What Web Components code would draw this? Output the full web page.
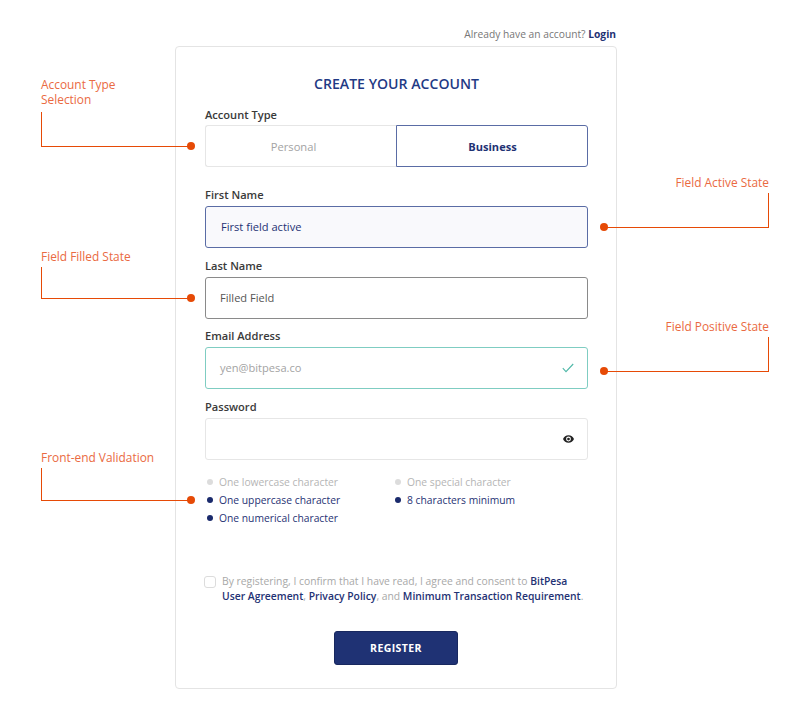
<!DOCTYPE html>
<html lang="en">
<head>
<meta charset="utf-8">
<title>Create your account</title>
<style>
  html, body { margin: 0; background: #fff; }
  body { font-family: "Open Sans", sans-serif; width: 800px; height: 722px; position: relative; overflow: hidden; }
</style>
</head>
<body>
<signup-page>
  <call-out style="left:41px;top:77px;width:150px;--gap:5px;--stem:34px" label="Account Type&#10;Selection"></call-out>
  <call-out style="left:41px;top:249px;width:150px;--stem:31px" label="Field Filled State"></call-out>
  <call-out style="left:41px;top:450px;width:150px;--stem:32px" label="Front-end Validation"></call-out>
  <call-out side="right" style="left:604px;top:175px;width:165px;--stem:34px" label="Field Active State"></call-out>
  <call-out side="right" style="left:604px;top:319px;width:165px;--stem:34px" label="Field Positive State"></call-out>
</signup-page>

<script>
const calloutTemplate = document.createElement('template');
calloutTemplate.innerHTML = `
  <style>
    :host {
      position: absolute;
      display: block;
      font-size: 11.9px;
      line-height: 15px;
      color: #ea6a42;
    }
    :host([side="right"]) { text-align: right; }
    .label { white-space: pre-line; margin-bottom: var(--gap, 3px); }
    .line {
      height: var(--stem);
      border-left: 1px solid #e64a06;
      border-bottom: 1px solid #e64a06;
      position: relative;
    }
    :host([side="right"]) .line {
      border-left: 0;
      border-right: 1px solid #e64a06;
    }
    .dot {
      position: absolute;
      right: -4px;
      bottom: -4px;
      width: 8px;
      height: 8px;
      border-radius: 50%;
      background: #e64a06;
    }
    :host([side="right"]) .dot { right: auto; left: -4px; }
  </style>
  <div class="label"></div>
  <div class="line"><span class="dot"></span></div>
`;

class CallOut extends HTMLElement {
  constructor() {
    super();
    this.attachShadow({ mode: 'open' });
    this.shadowRoot.appendChild(calloutTemplate.content.cloneNode(true));
  }

  connectedCallback() {
    this.shadowRoot.querySelector('.label').textContent = this.getAttribute('label');
  }
}

const fieldTemplate = document.createElement('template');
fieldTemplate.innerHTML = `
  <style>
    :host { display: block; }
    .label {
      font-size: 11.1px;
      font-weight: 600;
      line-height: 16px;
      color: #3a3a3a;
      margin-bottom: 3px;
    }
    .box {
      box-sizing: border-box;
      height: 42px;
      display: flex;
      align-items: center;
      justify-content: space-between;
      padding: 0 13px 0 15px;
      border: 1px solid #e6e6e6;
      border-radius: 3px;
      background: #fff;
      font-size: 11.1px;
      color: #555;
    }
    .box span { padding-bottom: 2px; }
    :host([state="active"]) .box {
      border-color: #5a6ca5;
      background: #f9f9fc;
      color: #1f3274;
    }
    :host([state="filled"]) .box { border-color: #8a8a8a; padding-left: 14px; }
    :host([state="positive"]) .box { border-color: #7fcdc2; color: #a3a3a3; padding-left: 14px; }
    ::slotted(svg) { display: block; }
  </style>
  <div class="label"></div>
  <div class="box"><span></span><slot></slot></div>
`;

class FormField extends HTMLElement {
  constructor() {
    super();
    this.attachShadow({ mode: 'open' });
    this.shadowRoot.appendChild(fieldTemplate.content.cloneNode(true));
  }

  connectedCallback() {
    this.shadowRoot.querySelector('.label').textContent = this.getAttribute('label');
    this.shadowRoot.querySelector('.box span').textContent = this.getAttribute('value') || '';
  }
}

const toggleTemplate = document.createElement('template');
toggleTemplate.innerHTML = `
  <style>
    :host { display: block; }
    .label {
      font-size: 11.1px;
      font-weight: 600;
      line-height: 16px;
      color: #3a3a3a;
      margin-bottom: 2px;
    }
    .options { display: grid; grid-template-columns: 191px 192px; height: 42px; }
    .option {
      display: flex;
      align-items: center;
      justify-content: center;
      box-sizing: border-box;
      font-size: 11.2px;
    }
    .off {
      border: 1px solid #e6e6e6;
      border-right: 0;
      border-radius: 3px 0 0 3px;
      color: #a3a3a3;
      padding-right: 15px;
    }
    .on {
      border: 1px solid #5a6ca5;
      border-radius: 0 3px 3px 0;
      color: #1f3274;
      font-weight: 700;
      font-size: 11.05px;
      padding-left: 1px;
    }
  </style>
  <div class="label">Account Type</div>
  <div class="options">
    <div class="option off">Personal</div>
    <div class="option on">Business</div>
  </div>
`;

class AccountToggle extends HTMLElement {
  constructor() {
    super();
    this.attachShadow({ mode: 'open' });
    this.shadowRoot.appendChild(toggleTemplate.content.cloneNode(true));
  }
}

const ruleTemplate = document.createElement('template');
ruleTemplate.innerHTML = `
  <style>
    :host {
      display: flex;
      align-items: center;
      gap: 6px;
      height: 18px;
      font-size: 10.3px;
      color: #b5b5b5;
    }
    .bullet { width: 6px; height: 6px; border-radius: 50%; background: #dcdcdc; flex: none; }
    :host([met]) { color: #1f3274; }
    :host([met]) .bullet { background: #1a2a6c; }
  </style>
  <span class="bullet"></span><slot></slot>
`;

class PasswordRule extends HTMLElement {
  constructor() {
    super();
    this.attachShadow({ mode: 'open' });
    this.shadowRoot.appendChild(ruleTemplate.content.cloneNode(true));
  }
}

const pageTemplate = document.createElement('template');
pageTemplate.innerHTML = `
  <style>
    :host { display: block; padding: 26px 0 0 175px; }
    .top {
      box-sizing: border-box;
      width: 442px;
      height: 20px;
      padding-right: 1px;
      text-align: right;
      font-size: 10.25px;
      line-height: 16px;
      color: #777;
    }
    a { color: #1f3274; font-weight: 700; text-decoration: none; }
    .card {
      box-sizing: border-box;
      width: 442px;
      height: 643px;
      padding: 26px 28px 0 29px;
      border: 1px solid #e4e4e4;
      border-radius: 4px;
      background: #fff;
    }
    h1 {
      margin: 0 0 12px;
      text-align: center;
      font-size: 14.1px;
      line-height: 22px;
      font-weight: 600;
      color: #1f3a85;
    }
    .fields { display: flex; flex-direction: column; }
    .first { margin-top: 20px; }
    .last { margin-top: 10px; }
    .email { margin-top: 9px; }
    .password { margin-top: 10px; }
    .rules {
      display: grid;
      grid-template-columns: 188px 1fr;
      padding: 13px 0 0 2px;
    }
    .consent {
      display: flex;
      gap: 6px;
      margin: 47px 0 0 -1px;
      font-size: 10.35px;
      line-height: 14.5px;
      color: #a8a8a8;
    }
    .box {
      box-sizing: border-box;
      flex: none;
      width: 12px;
      height: 12px;
      margin-top: 2px;
      border: 1px solid #dcdcdc;
      border-radius: 3px;
    }
    .consent a { font-weight: 600; }
    button {
      display: block;
      width: 124px;
      height: 34px;
      margin: 28px 0 0 129px;
      padding: 0;
      border: 1px solid #18285f;
      border-radius: 3px;
      background: #1f3274;
      color: #fff;
      font: 700 10.5px "Open Sans", sans-serif;
      letter-spacing: .4px;
    }
  </style>
  <div class="top">Already have an account? <a href="#login">Login</a></div>
  <section class="card">
    <h1>CREATE YOUR ACCOUNT</h1>
    <div class="fields">
      <account-toggle></account-toggle>
      <form-field class="first" state="active" label="First Name" value="First field active"></form-field>
      <form-field class="last" state="filled" label="Last Name" value="Filled Field"></form-field>
      <form-field class="email" state="positive" label="Email Address" value="yen@bitpesa.co">
        <svg width="12" height="10" viewBox="0 0 12 10" fill="none" stroke="#4fb8a8" stroke-width="1.1"><path d="M.8 5.2 4 8.6 11.2 1"/></svg>
      </form-field>
      <form-field class="password" label="Password">
        <svg width="11" height="8" viewBox="0 0 24 16"><path fill="#222" fill-rule="evenodd" d="M12 0C6.5 0 2 3.3 0 8c2 4.700 6.500 8 12 8s10-3.300 12-8c-2-4.700-6.500-8-12-8Zm0 13.300A5.300 5.300 0 1 1 12 2.700a5.300 5.300 0 0 1 0 10.600ZM12 5a3 3 0 1 0 0 6 3 3 0 0 0 0-6Z"/></svg>
      </form-field>
    </div>
    <div class="rules">
      <password-rule>One lowercase character</password-rule>
      <password-rule>One special character</password-rule>
      <password-rule met>One uppercase character</password-rule>
      <password-rule met>8 characters minimum</password-rule>
      <password-rule met>One numerical character</password-rule>
    </div>
    <div class="consent">
      <span class="box"></span>
      <div>By registering, I confirm that I have read, I agree and consent to <a href="#a">BitPesa User Agreement</a>, <a href="#p">Privacy Policy</a>, and <a href="#m">Minimum Transaction Requirement</a>.</div>
    </div>
    <button type="button">REGISTER</button>
  </section>
  <slot></slot>
`;

class SignupPage extends HTMLElement {
  constructor() {
    super();
    this.attachShadow({ mode: 'open' });
    this.shadowRoot.appendChild(pageTemplate.content.cloneNode(true));
  }
}

customElements.define('call-out', CallOut);
customElements.define('form-field', FormField);
customElements.define('account-toggle', AccountToggle);
customElements.define('password-rule', PasswordRule);
customElements.define('signup-page', SignupPage);
</script>
</body>
</html>
